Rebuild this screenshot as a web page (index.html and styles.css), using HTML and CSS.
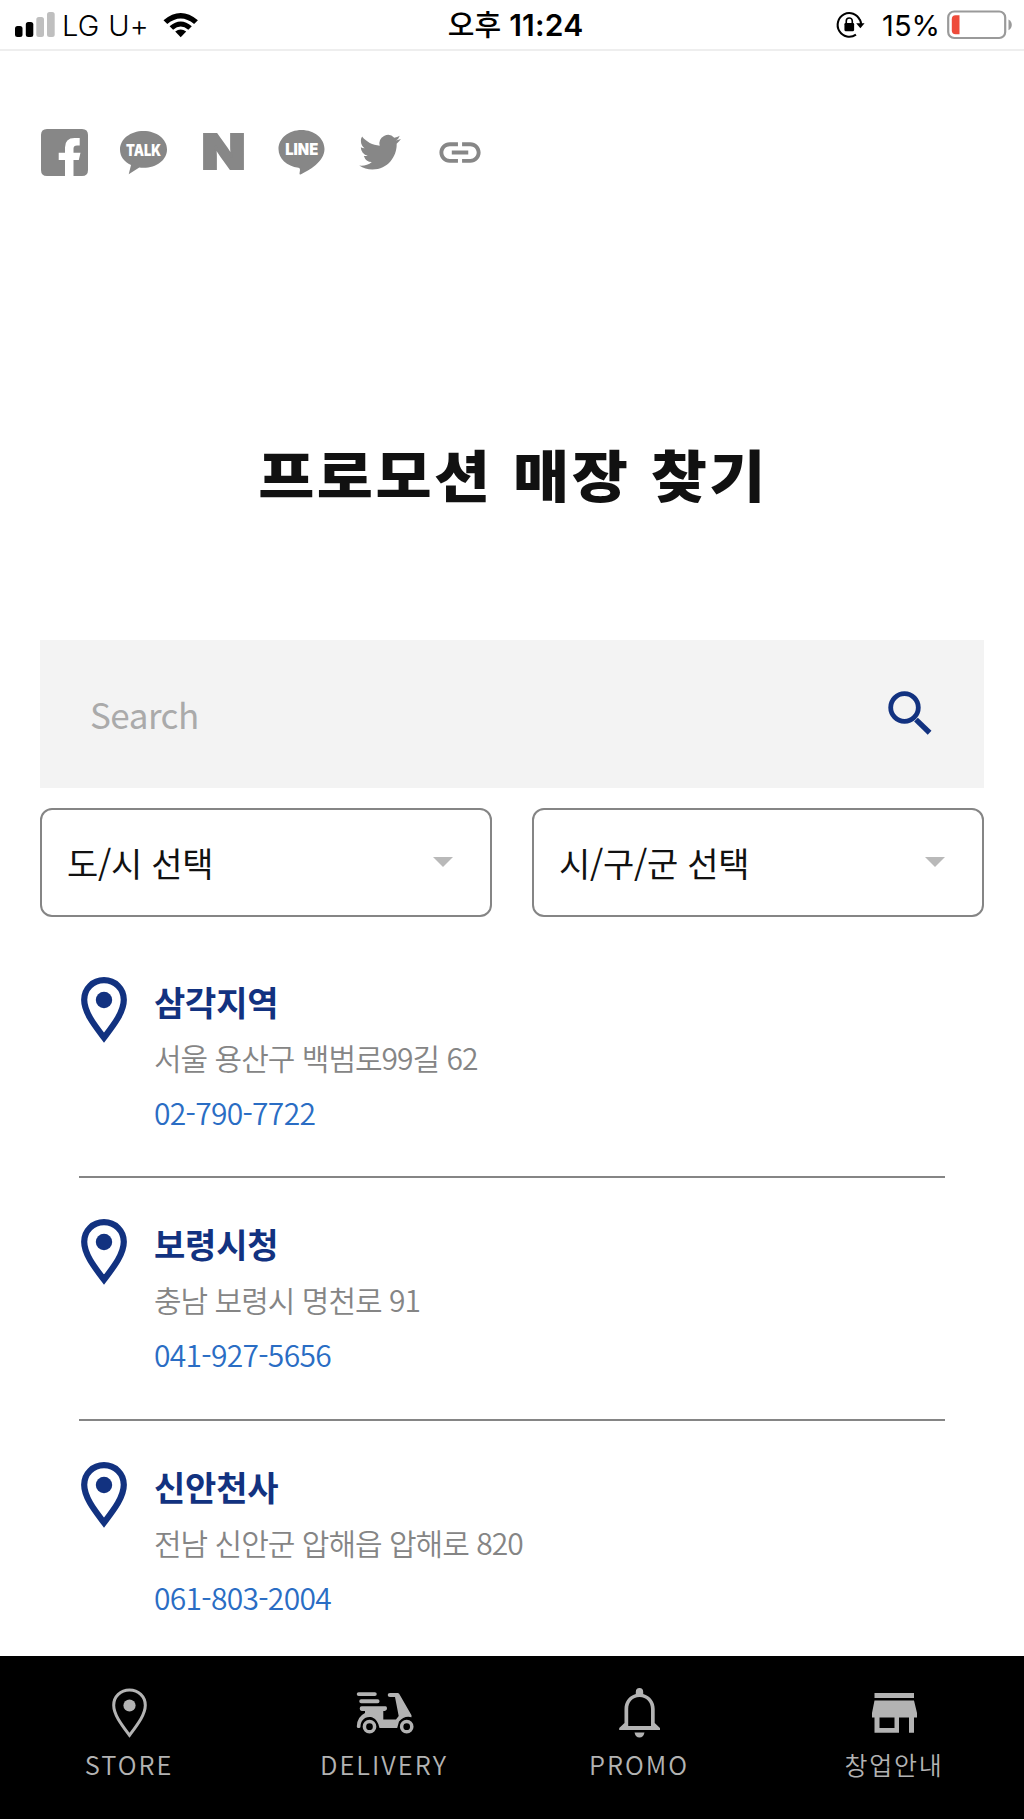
FILE: index.html
```html
<!DOCTYPE html>
<html lang="ko">
<head>
    <meta charset="UTF-8">
    <title>프로모션 매장 찾기</title>
    <link rel="stylesheet" href="styles.css">
</head>
<body>

    <div class="status-bar">
        <div class="status-left">
            <svg class="signal" width="40" height="26" viewBox="0 0 40 26">
                <rect x="0" y="14" width="7.5" height="11" rx="2.5"/>
                <rect x="10.8" y="10" width="7.5" height="15" rx="2.5"/>
                <rect class="off" x="21.3" y="5" width="7.7" height="20" rx="2.5"/>
                <rect class="off" x="32" y="0" width="7.7" height="25" rx="2.5"/>
            </svg>
            <span class="carrier">LG U+</span>
            <svg class="wifi" width="36" height="26" viewBox="0 0 36 26">
                <path d="M.5 8.300Q17.700 -6.300 34.900 8.300L31.100 12Q17.700 .900 4.300 12Z"/>
                <path d="M6.600 14.200Q17.700 4.600 28.800 14.200L25.300 17.700Q17.700 11.300 10.100 17.700Z"/>
                <path d="M12.200 19.600Q17.700 15.200 23.200 19.600L17.700 25.200Z"/>
            </svg>
        </div>
        <div class="clock"><span class="ampm">오후</span> 11:24</div>
        <div class="status-right">
            <svg class="rotation" width="28" height="28" viewBox="0 0 26 26">
                <path d="M21.300 8.500A10.800 11 0 1 0 17.600 21.900M21.300 8.200Q22.300 10 22.300 12.500" fill="none" stroke="#000" stroke-width="1.900"/>
                <path d="M17.800 11.300H25.600L21.700 16.100Z"/>
                <rect x="6.900" y="11.200" width="9" height="7.500" rx="1"/>
                <path d="M8.600 12V9.300a2.800 2.800 0 0 1 5.600 0V12" fill="none" stroke="#000" stroke-width="1.500"/>
            </svg>
            <span class="percent">15%</span>
            <svg class="battery" width="66" height="30" viewBox="0 0 66 30">
                <rect x="1.200" y="1.500" width="57" height="26.500" rx="6" fill="#fff" stroke="#9a9a9a" stroke-width="2.200"/>
                <path d="M8.500 5.200H12.500V24.300H8.500Q4.800 24.300 4.800 20.300V9.200Q4.800 5.200 8.500 5.200Z" fill="#ee4b3a"/>
                <path d="M61.500 9.500Q64.800 11.500 64.800 14.900T61.500 20.300Z" fill="#9a9a9a"/>
            </svg>
        </div>
    </div>

    <div class="social">
        <svg width="48" height="48" viewBox="0 0 48 48">
            <path d="M6 0H41Q47 0 47 6V41Q47 47 41 47H32.500V31H37.800L39.500 23.800H32.500V19.500Q32.500 16.500 36 16.500H38.700V9H33.500Q24 9 24 18.500V23.800H17.700V31H24V47H6Q0 47 0 41V6Q0 0 6 0Z"/>
        </svg>
        <svg width="48" height="48" viewBox="0 0 48 48">
            <path d="M23.500 2C10.500 2 0 10 0 20.500C0 27.500 4.200 32.800 11 36L8.700 45.200L19.300 38.500Q21 38.800 23.500 38.800C36.500 38.800 47 30.800 47 20.400S36.500 2 23.500 2Z"/>
            <text class="badge-text" x="6" y="26.500" textLength="35" lengthAdjust="spacingAndGlyphs">TALK</text>
        </svg>
        <svg width="48" height="48" viewBox="0 0 48 48">
            <text class="naver" x="2.500" y="39.800" textLength="44" lengthAdjust="spacingAndGlyphs">N</text>
        </svg>
        <svg width="48" height="48" viewBox="0 0 48 48">
            <path d="M23.500 1C10.700 1 .5 9.400 .5 20C.5 29.500 8.800 37.300 20.500 38.700Q22.300 39 22 41L21.500 44.500Q21.500 46 23 45.200C31 41.500 46.500 32.500 46.500 20C46.500 9.400 36.300 1 23.500 1Z"/>
            <text class="badge-text line" x="7.200" y="26" textLength="33" lengthAdjust="spacingAndGlyphs">LINE</text>
        </svg>
        <svg width="48" height="48" viewBox="0 0 48 48">
            <g transform="translate(2.200 2) scale(1.740 1.770)">
                <path d="M23.950 4.570a10 10 0 0 1-2.820.770 4.960 4.960 0 0 0 2.160-2.720c-.950.550-2 .950-3.130 1.180a4.920 4.920 0 0 0-8.380 4.480C7.690 8.100 4.070 6.130 1.640 3.160a4.820 4.820 0 0 0-.670 2.480c0 1.710.870 3.210 2.190 4.100a4.900 4.900 0 0 1-2.230-.620v.060a4.920 4.920 0 0 0 3.950 4.830 5 5 0 0 1-2.210.080 4.940 4.940 0 0 0 4.600 3.420A9.870 9.870 0 0 1 0 19.540a13.990 13.990 0 0 0 7.550 2.210c9.050 0 13.990-7.500 13.990-13.980 0-.210 0-.420-.020-.630a9.940 9.940 0 0 0 2.460-2.550z"/>
            </g>
        </svg>
        <svg width="48" height="48" viewBox="0 0 48 48">
            <g transform="translate(-.700 -1.200) scale(2.060)">
                <path d="M3.900 12c0-1.710 1.390-3.100 3.100-3.100h4V7H7c-2.760 0-5 2.240-5 5s2.240 5 5 5h4v-1.900H7c-1.710 0-3.100-1.390-3.100-3.100zM8 13h8v-2H8v2zm9-6h-4v1.900h4c1.710 0 3.100 1.390 3.100 3.100s-1.390 3.100-3.100 3.100h-4V17h4c2.760 0 5-2.240 5-5s-2.240-5-5-5z"/>
            </g>
        </svg>
    </div>

    <h1>프로모션 매장 찾기</h1>

    <div class="search-box">
        <span>Search</span>
        <svg width="44" height="44" viewBox="0 0 44 44">
            <circle cx="16.500" cy="16.500" r="13.800" fill="none" stroke="#123280" stroke-width="4.800"/>
            <path d="M28 28.600L41.600 41.700" stroke="#123280" stroke-width="5.400"/>
        </svg>
    </div>

    <div class="selects">
        <div class="select"><span>도/시 선택</span><i class="arrow"></i></div>
        <div class="select"><span>시/구/군 선택</span><i class="arrow"></i></div>
    </div>

    <div class="store-list">
        <div class="store">
            <svg class="pin" width="46" height="66" viewBox="0 0 46 66">
                <path d="M23 3.200C11.800 3.200 3.200 11.800 3.200 22.800C3.200 35 13 47.500 23 60.700C33 47.500 42.800 35 42.800 22.800C42.800 11.800 34.200 3.200 23 3.200Z"/>
                <circle cx="23" cy="23" r="8.200"/>
            </svg>
            <div class="info">
                <div class="name">삼각지역</div>
                <div class="address">서울 용산구 백범로99길 62</div>
                <div class="phone">02-790-7722</div>
            </div>
        </div>
        <div class="store">
            <svg class="pin" width="46" height="66" viewBox="0 0 46 66">
                <path d="M23 3.200C11.800 3.200 3.200 11.800 3.200 22.800C3.200 35 13 47.500 23 60.700C33 47.500 42.800 35 42.800 22.800C42.800 11.800 34.200 3.200 23 3.200Z"/>
                <circle cx="23" cy="23" r="8.200"/>
            </svg>
            <div class="info">
                <div class="name">보령시청</div>
                <div class="address">충남 보령시 명천로 91</div>
                <div class="phone">041-927-5656</div>
            </div>
        </div>
        <div class="store">
            <svg class="pin" width="46" height="66" viewBox="0 0 46 66">
                <path d="M23 3.200C11.800 3.200 3.200 11.800 3.200 22.800C3.200 35 13 47.500 23 60.700C33 47.500 42.800 35 42.800 22.800C42.800 11.800 34.200 3.200 23 3.200Z"/>
                <circle cx="23" cy="23" r="8.200"/>
            </svg>
            <div class="info">
                <div class="name">신안천사</div>
                <div class="address">전남 신안군 압해읍 압해로 820</div>
                <div class="phone">061-803-2004</div>
            </div>
        </div>
    </div>

    <div class="bottom-nav">
        <div class="nav-item">
            <svg width="60" height="52" viewBox="0 0 60 52">
                <path d="M30.500 2C21.500 2 14.700 8.700 14.700 17.200C14.700 26.500 22.500 36.500 30.500 47.300C38.500 36.500 46.300 26.500 46.300 17.200C46.300 8.700 39.500 2 30.500 2Z" fill="none" stroke="#b3b3b3" stroke-width="3"/>
                <circle cx="30.500" cy="17.500" r="6.100"/>
            </svg>
            <span>STORE</span>
        </div>
        <div class="nav-item">
            <svg width="60" height="52" viewBox="0 0 60 52">
                <path d="M4.700 6.100H20.800M7.200 13.200H23.600" stroke="#b3b3b3" stroke-width="3.900" stroke-linecap="round"/>
                <path d="M7.700 18.200H31.500Q33 18.200 33 20.200Q33 23 29.300 23V31.500H42L44.700 28L41 8.900H36Q33.700 8.900 33.700 6.900T36 4.900H43.500Q44.700 4.900 45.300 6L57.500 27.200V29.200Q50 27.500 45 33.500L43.200 40H25.500Q24 32 18.500 29.500C11 27.500 6.500 33 6.500 38.500Q6.500 40 5 40H4.500Q2.800 40 2.800 38.500Q2.800 29 11 25V23H7.700Q5.700 23 5.700 20.600T7.700 18.200Z"/>
                <circle cx="15.500" cy="38.700" r="5.100" fill="none" stroke="#b3b3b3" stroke-width="3.500"/>
                <circle cx="52.700" cy="38.700" r="5.100" fill="none" stroke="#b3b3b3" stroke-width="3.500"/>
            </svg>
            <span>DELIVERY</span>
        </div>
        <div class="nav-item">
            <svg width="60" height="52" viewBox="0 0 60 52">
                <path d="M26.800 6V4Q26.800 0 30.500 0T34.200 4V6C41.500 8 45.700 14 45.700 21V35L51 40V42H10.200V40L15.500 35V21C15.500 14 19.500 8 26.800 6ZM19.200 38H42V21C42 14 37.500 9 30.500 9S19.200 14 19.200 21Z" fill-rule="evenodd"/>
                <path d="M25.500 44.500H35.500Q34.500 49.500 30.500 49.500T25.500 44.500Z"/>
            </svg>
            <span>PROMO</span>
        </div>
        <div class="nav-item">
            <svg width="60" height="52" viewBox="0 0 60 52">
                <path d="M10.500 5H50V10H10.500ZM10.500 12.500H50L53 25V29.500H50V44.700H45V29.500H35V44.700H10.500V29.500H8V25ZM15.500 29.500V40H30.500V29.500Z" fill-rule="evenodd"/>
            </svg>
            <span class="ko">창업안내</span>
        </div>
    </div>

</body>
</html>
```

FILE: styles.css
```css
* {
    box-sizing: border-box;
}

body {
    margin: 0;
    height: 1820px;
    display: flex;
    flex-direction: column;
    background: #fff;
    color: #111;
    font-family: "Noto Sans CJK KR", sans-serif;
    overflow: hidden;
}

body > * {
    flex: none;
}

svg {
    display: block;
    flex: none;
    overflow: visible;
}

.status-bar {
    display: grid;
    grid-template-columns: 1fr auto 1fr;
    align-items: center;
    height: 51px;
    padding: 0 11px 0 15px;
    border-bottom: 2px solid #eee;
    color: #000;
    font-family: Inter, "Noto Sans CJK KR", sans-serif;
    font-size: 29px;
}

.status-left,
.status-right {
    display: flex;
    align-items: center;
}

.status-right {
    justify-content: flex-end;
}

.signal .off {
    fill: #bfbfbf;
}

.carrier {
    margin-left: 7px;
    margin-right: 14px;
    font-weight: 300;
    letter-spacing: 0.3px;
    line-height: 48px;
    padding-top: 1px;
}

.clock {
    font-size: 30px;
    font-weight: 600;
    letter-spacing: 0.2px;
    line-height: 48px;
    padding-top: 1px;
    padding-left: 3px;
}

.ampm {
    font-weight: 500;
    font-size: 29px;
}

.percent {
    margin-left: 17px;
    margin-right: 7px;
    line-height: 48px;
    padding-top: 1px;
}

.social {
    display: flex;
    gap: 31px;
    height: 48px;
    margin: 78px 0 0 41px;
    fill: #878787;
}

.badge-text {
    font: 900 16px Inter, sans-serif;
    fill: #fff;
}

.badge-text.line {
    font-size: 15.5px;
}

.naver {
    font: 900 48px Inter, sans-serif;
    stroke: #878787;
    stroke-width: 1.8;
}

h1 {
    margin: 246px 0 0;
    height: 100px;
    line-height: 100px;
    padding-left: 2px;
    font-size: 56px;
    font-weight: 900;
    letter-spacing: 2.2px;
    word-spacing: 1px;
    text-align: center;
    white-space: nowrap;
    transform: scaleX(1.09);
}

.search-box {
    display: flex;
    align-items: center;
    justify-content: space-between;
    height: 148px;
    margin: 117px 40px 0;
    padding: 0 52px 0 50px;
    background: #f3f3f3;
    color: #aaa;
    font-size: 35px;
    letter-spacing: -0.5px;
}

.search-box span {
    margin-top: -2px;
}

.search-box svg {
    margin-top: -2px;
}

.selects {
    display: grid;
    grid-template-columns: 1fr 1fr;
    gap: 40px;
    margin: 20px 40px 0;
}

.select {
    display: flex;
    align-items: center;
    justify-content: space-between;
    height: 109px;
    padding: 0 37px 0 25px;
    border: 2px solid #858585;
    border-radius: 12px;
    font-size: 34px;
    letter-spacing: -0.3px;
}

.arrow {
    margin-top: -2px;
    border: 10px solid transparent;
    border-top-color: #b9b9b9;
    border-bottom: 0;
}

.store-list {
    padding: 0 79px;
    margin: 19px 0 0;
}

.store {
    display: flex;
    height: 242.4px;
    padding-top: 41px;
    border-bottom: 2px solid #858585;
}

.store:last-child {
    height: 220px;
    border-bottom: 0;
}

.pin {
    margin-left: 2px;
    fill: none;
    stroke: #123280;
    stroke-width: 6.200;
}

.pin circle {
    fill: #123280;
    stroke: none;
}

.info {
    margin-left: 27px;
    white-space: nowrap;
}

.name {
    height: 53px;
    line-height: 49px;
    color: #123280;
    font-size: 34px;
    font-weight: 700;
    letter-spacing: -0.2px;
}

.address,
.phone {
    height: 54px;
    line-height: 54px;
    color: #858585;
    font-size: 30px;
}

.address {
    height: 55px;
    font-weight: 350;
    letter-spacing: -1px;
}

.phone {
    color: #2a6dc4;
    font-weight: 350;
    letter-spacing: -0.7px;
}

.bottom-nav {
    display: grid;
    grid-template-columns: repeat(4, 255px);
    height: 163px;
    margin-top: auto;
    margin-bottom: 1px;
    padding-top: 32px;
    padding-left: 1px;
    background: #000;
    color: #b3b3b3;
    fill: #b3b3b3;
}

.nav-item {
    display: flex;
    flex-direction: column;
    align-items: center;
    font-size: 25.5px;
    font-weight: 350;
    letter-spacing: 2px;
}

.nav-item span {
    height: 48px;
    line-height: 48px;
    padding-left: 1px;
}

.nav-item .ko {
    font-size: 25px;
    letter-spacing: 1.8px;
}
```
